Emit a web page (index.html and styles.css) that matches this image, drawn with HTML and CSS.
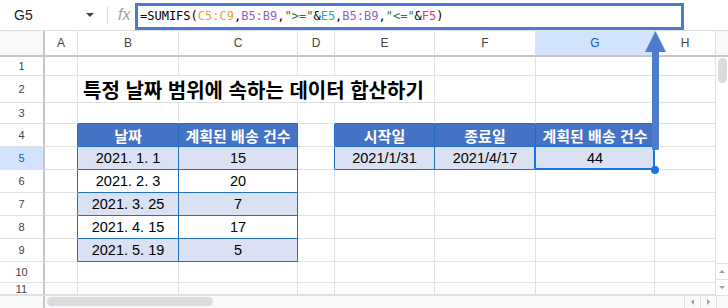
FILE: index.html
```html
<!DOCTYPE html>
<html lang="ko">
<head>
  <meta charset="UTF-8" />
  <title>SUMIFS 날짜 범위</title>
  <link rel="stylesheet" href="styles.css">
</head>
<body>
  <div class="app">
    <div class="formula-bar">
      <div class="name-box">G5</div>
      <span class="caret"></span>
      <div class="divider"></div>
      <div class="fx">fx</div>
      <div class="formula-input">=SUMIFS(<span class="r1">C5:C9</span>,<span class="r2">B5:B9</span>,<span class="str">"&gt;="</span>&amp;<span class="r3">E5</span>,<span class="r2">B5:B9</span>,<span class="str">"&lt;="</span>&amp;<span class="r4">F5</span>)</div>
    </div>

    <div class="sheet">
      <div class="vscroll">
        <div class="vthumb"></div>
        <div class="vbtn up"></div>
        <div class="vbtn down"></div>
      </div>

      <div class="corner"></div>
      <div class="ch">A</div><div class="ch">B</div><div class="ch">C</div><div class="ch">D</div>
      <div class="ch">E</div><div class="ch">F</div><div class="ch on">G</div><div class="ch">H</div>
      <div class="ch fill"></div>

      <div class="rh">1</div><div class="c"></div><div class="c"></div><div class="c"></div><div class="c"></div>
      <div class="c"></div><div class="c"></div><div class="c"></div><div class="c"></div>

      <div class="rh">2</div><div class="c"></div>
      <div class="c title">특정 날짜 범위에 속하는 데이터 합산하기</div>
      <div class="c"></div><div class="c"></div><div class="c"></div>

      <div class="rh">3</div><div class="c"></div><div class="c above"></div><div class="c above"></div><div class="c"></div>
      <div class="c above"></div><div class="c above"></div><div class="c above"></div><div class="c"></div>

      <div class="rh">4</div><div class="c leftof"></div>
      <div class="c th">날짜</div><div class="c th">계획된 배송 건수</div>
      <div class="c leftof"></div>
      <div class="c th">시작일</div><div class="c th">종료일</div><div class="c th">계획된 배송 건수</div>
      <div class="c"></div>

      <div class="rh on">5</div><div class="c leftof"></div>
      <div class="c td alt">2021. 1. 1</div><div class="c td alt">15</div>
      <div class="c leftof"></div>
      <div class="c td alt">2021/1/31</div><div class="c td alt">2021/4/17</div><div class="c td alt selected">44</div>
      <div class="c"></div>

      <div class="rh">6</div><div class="c leftof"></div>
      <div class="c td">2021. 2. 3</div><div class="c td">20</div>
      <div class="c"></div><div class="c"></div><div class="c"></div><div class="c"></div><div class="c"></div>

      <div class="rh">7</div><div class="c leftof"></div>
      <div class="c td alt">2021. 3. 25</div><div class="c td alt">7</div>
      <div class="c"></div><div class="c"></div><div class="c"></div><div class="c"></div><div class="c"></div>

      <div class="rh">8</div><div class="c leftof"></div>
      <div class="c td">2021. 4. 15</div><div class="c td">17</div>
      <div class="c"></div><div class="c"></div><div class="c"></div><div class="c"></div><div class="c"></div>

      <div class="rh">9</div><div class="c leftof"></div>
      <div class="c td alt">2021. 5. 19</div><div class="c td alt">5</div>
      <div class="c"></div><div class="c"></div><div class="c"></div><div class="c"></div><div class="c"></div>

      <div class="rh">10</div><div class="c"></div><div class="c"></div><div class="c"></div><div class="c"></div>
      <div class="c"></div><div class="c"></div><div class="c"></div><div class="c"></div>

      <div class="rh">11</div><div class="c"></div><div class="c"></div><div class="c"></div><div class="c"></div>
      <div class="c"></div><div class="c"></div><div class="c"></div><div class="c"></div>
    </div>

    <div class="hscroll">
      <div class="hcorner"></div>
      <div class="htrack"><div class="hthumb"></div></div>
      <div class="hbtn left"></div>
      <div class="hbtn right"></div>
      <div class="hend"></div>
    </div>

    <svg class="arrow" width="32" height="126" viewBox="0 0 32 126">
      <polygon points="15.5,3 5,24 26,24" fill="#4d7ccf" />
      <rect x="12" y="22" width="7" height="100" rx="1.5" fill="#4d7ccf" />
    </svg>
  </div>
</body>
</html>
```

FILE: styles.css
```css
body {
  margin: 0;
  font-family: "Liberation Sans", Arial, sans-serif;
  background: #fff;
}
.app {
  position: relative;
  width: 728px;
  height: 308px;
  overflow: hidden;
}

/* formula bar */
.formula-bar {
  display: flex;
  align-items: center;
  height: 30px;
  border-bottom: 1px solid #e1e1e1;
}
.name-box {
  width: 72px;
  padding-left: 14px;
  font-size: 14px;
  color: #202124;
}
.caret {
  width: 0;
  height: 0;
  border-left: 4px solid transparent;
  border-right: 4px solid transparent;
  border-top: 4px solid #444;
  margin-right: 13px;
}
.divider {
  width: 1px;
  height: 18px;
  background: #dadce0;
}
.fx {
  width: 17px;
  padding-left: 10px;
  font-size: 16px;
  font-style: italic;
  color: #a0a4a8;
}
.formula-input {
  box-sizing: border-box;
  width: 549px;
  height: 27px;
  margin-top: 2px;
  border: 3px solid #4a7bd0;
  padding-left: 2px;
  font-family: "DejaVu Sans Mono", monospace;
  font-size: 12px;
  line-height: 21px;
  color: #000;
  white-space: nowrap;
}
.r1 { color: #f29b38; }
.r2 { color: #9a5fbf; }
.r3 { color: #2aa4d5; }
.r4 { color: #c63c8e; }
.str { color: #188038; }

/* grid */
.sheet {
  display: grid;
  grid-template-columns: 45px 33px 101px 119px 37px 100px 101px 119px 61px 12px;
  grid-template-rows: 26px 19px 27px 21px repeat(6, 23px) 21px 12px;
}
.sheet > div {
  box-sizing: border-box;
}
.corner {
  background: #f8f9fa;
  border-right: 2px solid #c4c7c5;
  border-bottom: 2px solid #c4c7c5;
}
.ch {
  display: flex;
  align-items: center;
  justify-content: center;
  font-size: 12px;
  color: #444;
  border-right: 1px solid #e1e1e1;
  border-bottom: 2px solid #c4c7c5;
}
.ch.on { background: #d3e3fd; color: #0b57d0; }
.ch.fill { background: #f8f9fa; border-right: none; }
.rh {
  display: flex;
  align-items: center;
  justify-content: center;
  font-size: 11px;
  color: #444;
  border-right: 2px solid #c4c7c5;
  border-bottom: 1px solid #e1e1e1;
}
.rh.on { background: #d3e3fd; color: #0b57d0; }
.c {
  display: flex;
  align-items: center;
  justify-content: center;
  font-size: 14.5px;
  color: #000;
  white-space: nowrap;
  border-right: 1px solid #e1e1e1;
  border-bottom: 1px solid #e1e1e1;
}
.title {
  grid-column: span 4;
  justify-content: flex-start;
  padding-left: 5px;
  font-family: "Noto Sans CJK KR", sans-serif;
  font-weight: bold;
  font-size: 20px;
}
.above { border-bottom-color: #2370c0; }
.leftof { border-right-color: #2370c0; }
.th {
  background: #4472c4;
  color: #fff;
  font-family: "Noto Sans CJK KR", sans-serif;
  font-weight: bold;
  font-size: 15px;
  border-right-color: #2370c0;
  border-bottom-color: #2370c0;
}
.td {
  border-right-color: #2370c0;
  border-bottom-color: #2370c0;
}
.alt { background: #d9e1f2; }
.selected { position: relative; }
.selected::after {
  content: "";
  position: absolute;
  top: -2px;
  left: -2px;
  right: -1px;
  bottom: -1px;
  border: 2px solid #1a73e8;
}
.selected::before {
  content: "";
  position: absolute;
  right: -5px;
  bottom: -5px;
  width: 8px;
  height: 8px;
  border-radius: 50%;
  background: #1a73e8;
  z-index: 1;
}

/* scrollbars */
.vscroll {
  grid-column: 10;
  grid-row: 2 / span 11;
  display: flex;
  flex-direction: column;
  background: #fff;
}
.vthumb {
  width: 9px;
  height: 25px;
  margin: 1px 0 0 2px;
  border-radius: 5px;
  background: #dadce0;
  flex: none;
}
.vbtn {
  position: relative;
  height: 16px;
  border-top: 1px solid #e1e1e1;
  box-sizing: border-box;
  flex: none;
}
.vbtn.up { margin-top: auto; }
.vbtn::after {
  content: "";
  position: absolute;
  left: 3px;
  top: 6px;
  border-left: 3px solid transparent;
  border-right: 3px solid transparent;
}
.vbtn.up::after { border-bottom: 3px solid #9aa0a6; }
.vbtn.down::after { border-top: 3px solid #9aa0a6; }

.hscroll {
  display: flex;
  height: 13px;
  background: #f8f9fa;
  border-top: 1px solid #e1e1e1;
  box-sizing: border-box;
}
.hcorner {
  width: 45px;
  border-right: 2px solid #c4c7c5;
  box-sizing: border-box;
}
.htrack {
  flex: 1;
  padding: 1px 0 0 2px;
}
.hthumb {
  width: 166px;
  height: 9px;
  border-radius: 5px;
  background: #dadce0;
}
.hbtn {
  position: relative;
  width: 16px;
  border-left: 1px solid #e1e1e1;
  box-sizing: border-box;
}
.hbtn::after {
  content: "";
  position: absolute;
  top: 3px;
  left: 6px;
  border-top: 3px solid transparent;
  border-bottom: 3px solid transparent;
}
.hbtn.left::after { border-right: 3px solid #9aa0a6; }
.hbtn.right::after { border-left: 3px solid #9aa0a6; }
.hend {
  width: 12px;
  border-left: 1px solid #e1e1e1;
  box-sizing: border-box;
}

.arrow {
  position: absolute;
  left: 640px;
  top: 28px;
}
```
